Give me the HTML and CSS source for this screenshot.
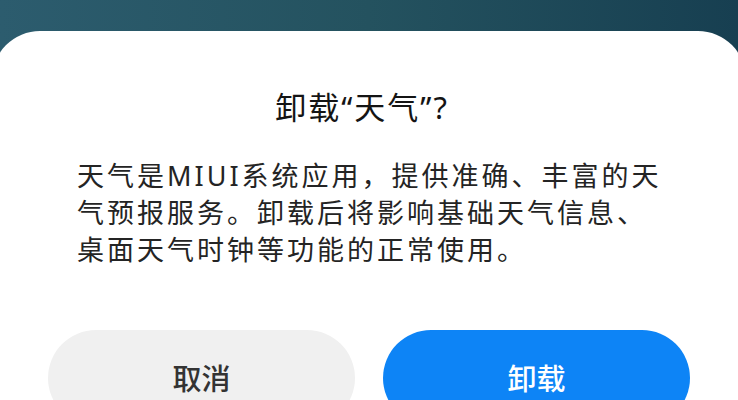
FILE: index.html
```html
<!DOCTYPE html>
<html lang="zh-CN">
<head>
<meta charset="utf-8">
<link rel="stylesheet" href="styles.css">
</head>
<body>
<div class="screen">
  <div class="card">
    <h1 class="title">卸载“天气”?</h1>
    <p class="message">天气是MIUI系统应用，提供准确、丰富的天气预报服务。卸载后将影响基础天气信息、桌面天气时钟等功能的正常使用。</p>
    <div class="actions">
      <button class="btn btn-cancel">取消</button>
      <button class="btn btn-primary">卸载</button>
    </div>
  </div>
</div>
</body>
</html>
```
FILE: styles.css
```css
html, body {
  margin: 0;
  padding: 0;
}
body {
  width: 738px;
  height: 400px;
  overflow: hidden;
  font-family: "Noto Sans", "Noto Sans CJK SC", sans-serif;
  background: linear-gradient(90deg, #2c5c6e 0%, #24525f 50%, #173f51 100%);
}
.screen {
  padding-top: 31px;
}
.card {
  margin-left: -8px;
  width: 754px;
  height: 369px;
  overflow: hidden;
  background: #ffffff;
  border-radius: 48px 48px 0 0;
  box-sizing: border-box;
}
.title {
  margin: 0;
  padding-top: 56px;
  text-align: center;
  font-size: 31px;
  font-weight: 400;
  line-height: 40px;
  letter-spacing: 2px;
  color: #141414;
  padding-right: 14px;
}
.message {
  margin: 30px 0 0 0;
  padding: 0 80px 0 85px;
  font-size: 27px;
  line-height: 37px;
  letter-spacing: 3px;
  color: #242424;
}
.actions {
  display: flex;
  gap: 28px;
  padding-left: 56px;
  margin-top: 62px;
}
.btn {
  width: 307px;
  height: 96px;
  border: none;
  border-radius: 48px;
  font-family: "Noto Sans CJK SC", sans-serif;
  font-size: 29px;
  font-weight: 500;
  padding-bottom: 4px;
}
.btn-cancel {
  background: #f0f0f0;
  color: #333333;
}
.btn-primary {
  background: #0d84f6;
  color: #ffffff;
}
```
